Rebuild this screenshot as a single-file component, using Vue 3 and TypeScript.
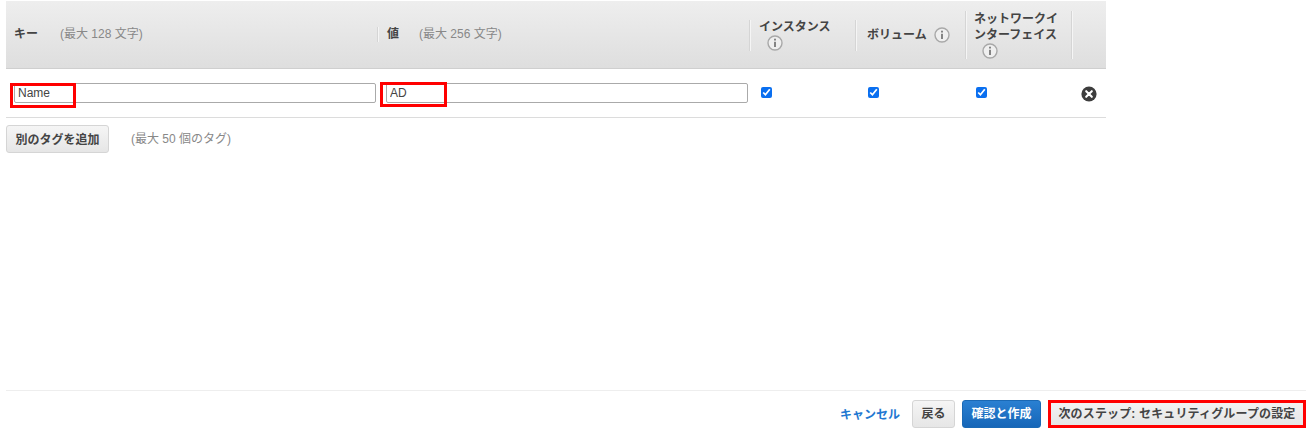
<script setup lang="ts">
interface Col { label: string; cls: string }
const cols: Col[] = [
  { label: 'インスタンス', cls: 'c-inst' },
  { label: 'ボリューム', cls: 'c-vol' },
  { label: 'ネットワークインターフェイス', cls: 'c-net' },
]
</script>

<template>
  <div class="page">
    <div class="table">
      <div class="head">
        <div class="hcell h-first"><b>キー</b><span class="hint">(最大 128 文字)</span></div>
        <div class="hcell h-val"><span class="sep tall-s"></span><b>値</b><span class="hint">(最大 256 文字)</span></div>
        <div v-for="c in cols" :key="c.cls" class="hcell h-check" :class="c.cls">
          <span class="sep"></span>
          <div class="hlabel">
            <b>{{ c.label }}</b>
            <svg class="info" viewBox="0 0 16 16" width="16" height="16">
              <circle cx="8" cy="8" r="7" fill="#efefef" stroke="#a8a8a8" stroke-width="1.4" />
              <rect x="7.1" y="6.8" width="1.8" height="5.2" fill="#777" />
              <rect x="7.1" y="3.7" width="1.8" height="1.8" fill="#777" />
            </svg>
          </div>
        </div>
        <div class="hcell h-end"><span class="sep"></span></div>
      </div>
      <div class="row">
        <div class="cell-input">
          <input class="txt" type="text" value="Name" />
          <span class="mark mark-key"></span>
        </div>
        <div class="cell-input">
          <input class="txt" type="text" value="AD" />
          <span class="mark mark-val"></span>
        </div>
        <div class="cell-check ck-inst"><input type="checkbox" checked /></div>
        <div class="cell-check ck-vol"><input type="checkbox" checked /></div>
        <div class="cell-check ck-net"><input type="checkbox" checked /></div>
        <div class="cell-x">
          <svg viewBox="0 0 16 16" width="16" height="16">
            <circle cx="8" cy="8" r="7.6" fill="#3d3d3d" />
            <path d="M5.2 5.2l5.6 5.6M10.8 5.2l-5.6 5.6" stroke="#fff" stroke-width="2.1" stroke-linecap="round" />
          </svg>
        </div>
      </div>
    </div>
    <div class="add">
      <button class="btn add-btn">別のタグを追加</button>
      <span class="hint">(最大 50 個のタグ)</span>
    </div>
    <div class="footer">
      <a class="cancel">キャンセル</a>
      <button class="btn back">戻る</button>
      <button class="btn primary">確認と作成</button>
      <button class="btn next">次のステップ: セキュリティグループの設定</button>
    </div>
  </div>
</template>

<style scoped>
.page {
  position: relative;
  width: 1306px;
  height: 431px;
  box-sizing: border-box;
  padding: 1px 0 0 6px;
  display: flex;
  flex-direction: column;
  background: #fff;
  color: #444;
  font-family: "Liberation Sans", "Noto Sans CJK JP", sans-serif;
  font-size: 12px;
  overflow: hidden;
}
.table { width: 1100px; }
.head {
  display: grid;
  grid-template-columns: 372px 372px 106px 110px 106px 34px;
  height: 68px;
  box-sizing: border-box;
  background: linear-gradient(#eeeeee, #dedede);
  border-bottom: 1px solid #cfcfcf;
}
.hcell {
  position: relative;
  display: flex;
  align-items: center;
  box-sizing: border-box;
}
.hcell b {
  font-weight: bold;
  color: #444;
  font-size: 12px;
}
.h-first { padding: 0 0 4px 8px; }
.h-val { padding: 0 0 4px 9px; }
.hint { color: #888; font-size: 12px; margin-left: 20px; }
.h-first .hint { margin-left: 22px; }
.sep {
  position: absolute;
  left: -1px;
  top: 10px;
  bottom: 9px;
  width: 1px;
  background: #f5f5f5;
  border-left: 1px solid #d5d5d5;
}
.h-val .sep { left: -1px; }
.tall-s { top: 26px; bottom: 26px; }
.c-inst .sep, .c-vol .sep { top: 19px; bottom: 17px; }
.h-check { padding-left: 9px; padding-right: 4px; }
.c-inst { padding-top: 1px; }
.c-vol { padding-left: 11px; }
.c-vol .hlabel { display: flex; align-items: center; gap: 7px; }
.c-net { padding-left: 8px; }
.hlabel { line-height: 16px; }
.c-inst .hlabel b, .c-net .hlabel b { display: block; }
.info { display: block; margin-left: 8px; }
.c-vol .info { margin: 0; }
.row {
  display: grid;
  grid-template-columns: 372px 372px 106px 110px 106px 34px;
  height: 49px;
  box-sizing: border-box;
  border-bottom: 1px solid #dcdcdc;
  align-items: center;
}
.cell-input { position: relative; display: flex; padding-left: 8px; }
.txt {
  width: 362px;
  height: 20px;
  box-sizing: border-box;
  border: 1px solid #aaa;
  border-radius: 2px;
  padding: 0 3px;
  font: 12px "Liberation Sans", "Noto Sans CJK JP", sans-serif;
  color: #444;
  outline: none;
  background: #fff;
}
.mark {
  position: absolute;
  height: 25px;
  width: 66px;
  box-sizing: border-box;
  border: 3px solid #f00;
  pointer-events: none;
}
.mark-key { left: 4px; top: 0; }
.mark-val { left: 2px; top: -1px; width: 67px; }
.cell-check { padding-left: 11px; display: flex; }
.ck-vol { padding-left: 12px; }
.ck-net { padding-left: 10px; }
.cell-check input {
  width: 11px;
  height: 11px;
  margin: -2px 0 0 0;
  accent-color: #0a6ff0;
}
.cell-x { display: flex; padding-left: 9px; padding-top: 1px; }
.add {
  display: flex;
  align-items: center;
  margin-top: 7px;
}
.btn {
  box-sizing: border-box;
  font: bold 12px "Liberation Sans", "Noto Sans CJK JP", sans-serif;
  color: #444;
  border: 1px solid #d5d5d5;
  border-radius: 3px;
  background: linear-gradient(#f5f5f5, #e6e6e6);
  padding: 0 0 2px;
}
.add-btn { width: 103px; height: 28px; }
.add .hint { margin: 0 0 3px 22px; }
.footer {
  margin-top: auto;
  width: 1300px;
  height: 41px;
  box-sizing: border-box;
  border-top: 1px solid #eee;
  display: flex;
  align-items: center;
  justify-content: flex-end;
  padding-top: 5px;
}
.cancel { color: #1f78d1; font-weight: bold; margin-right: 12px; }
.back { width: 43px; height: 28px; margin-right: 7px; }
.primary {
  width: 79px;
  height: 28px;
  margin-right: 7px;
  color: #fff;
  border-color: #1a69b5;
  background: linear-gradient(#2a80d2, #1666b8);
}
.next {
  width: 258px;
  height: 28px;
  border: 3px solid #f00;
  border-radius: 0;
  letter-spacing: 0.15px;
  background: linear-gradient(#f2f2f2, #e6e6e6);
}
</style>
